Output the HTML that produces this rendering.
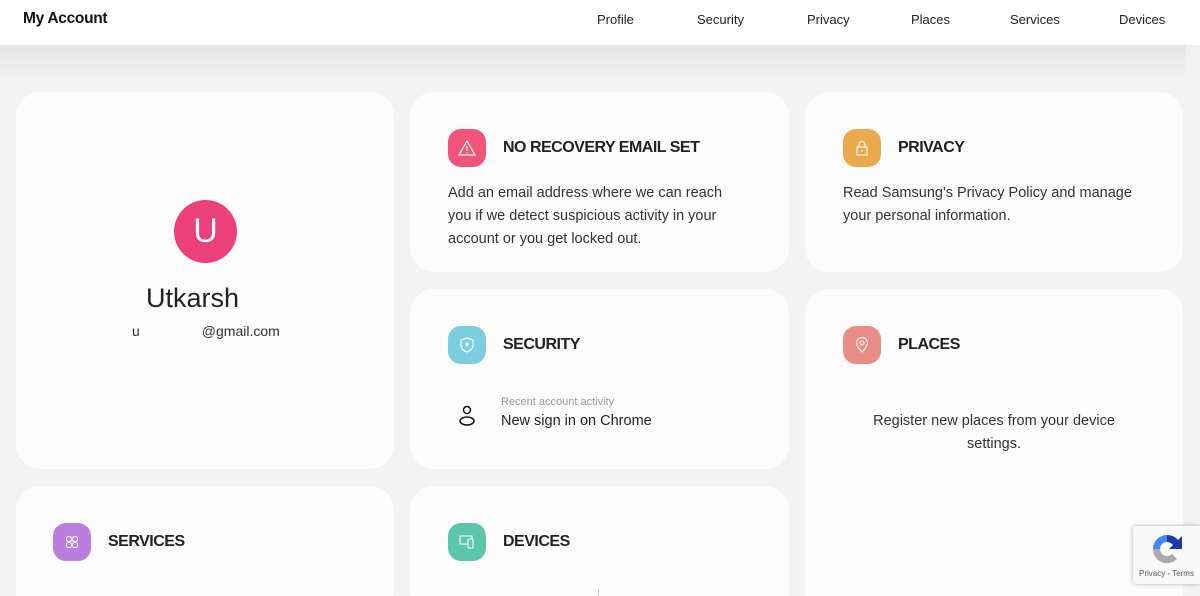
<!DOCTYPE html>
<html><head><meta charset="utf-8"><style>
*{box-sizing:border-box;margin:0;padding:0}
html,body{width:1200px;height:596px;overflow:hidden}
body{background:#f3f3f3;font-family:"Liberation Sans","DejaVu Sans",sans-serif;color:#222;position:relative}
#wrap{position:absolute;left:0;top:0;width:1200px;height:596px;overflow:hidden}
.hdr{position:absolute;left:0;top:0;width:1200px;height:45px;background:#fff;z-index:2}
.logo{position:absolute;left:23px;top:10px;font-size:15.5px;font-weight:bold;color:#111;letter-spacing:-0.3px}
.nav{position:absolute;top:12px;font-size:13px;color:#222}
.grad{position:absolute;left:0;top:45px;width:1200px;height:40px;background:linear-gradient(#e5e5e5,#f3f3f3)}
.sb{position:absolute;left:1186px;top:45px;width:14px;height:551px;background:#f1f1f1}
.card{position:absolute;background:#fcfcfc;border-radius:24px}
.ic{position:absolute;width:38px;height:38px;border-radius:13px;display:flex;align-items:center;justify-content:center}
.t{position:absolute;font-size:16px;font-weight:bold;color:#222;letter-spacing:-0.5px}
.p{position:absolute;font-size:14.5px;line-height:23px;color:#333}
</style></head><body><div id="wrap">
<div class="hdr">
<div class="logo">My Account</div>
<div class="nav" style="left:597px">Profile</div>
<div class="nav" style="left:697px">Security</div>
<div class="nav" style="left:807px">Privacy</div>
<div class="nav" style="left:911px">Places</div>
<div class="nav" style="left:1010px">Services</div>
<div class="nav" style="left:1119px">Devices</div>
</div>
<div class="grad"></div>
<div class="sb"></div>

<div class="card" style="left:16px;top:92px;width:378px;height:377px">
<div style="position:absolute;left:158px;top:108px;width:63px;height:63px;border-radius:50%;background:#ec407a;color:#fff;font-size:34px;text-align:center;line-height:63px">U</div>
<div style="position:absolute;left:130px;top:191px;font-size:27px;color:#222">Utkarsh</div>
<div style="position:absolute;left:116px;top:231px;font-size:14px;color:#333">u<span style="display:inline-block;width:62px"></span>@gmail.com</div>
</div>

<div class="card" style="left:410px;top:92px;width:379px;height:180px">
<div class="ic" style="left:38px;top:37px;background:#f25378"><svg width="20" height="20" viewBox="0 0 20 20" fill="none" stroke="#fff" stroke-width="1.2"><path d="M10 3L18 17H2Z"/><path d="M10 8v5M10 14.5v1"/></svg></div>
<div class="t" style="left:93px;top:47px">NO RECOVERY EMAIL SET</div>
<div class="p" style="left:38px;top:90px">Add an email address where we can reach<br>you if we detect suspicious activity in your<br>account or you get locked out.</div>
</div>

<div class="card" style="left:410px;top:289px;width:379px;height:180px">
<div class="ic" style="left:38px;top:37px;background:#7ccde0"><svg width="18" height="18" viewBox="0 0 18 18" fill="none" stroke="#fff" stroke-width="1.1"><path d="M9 2L15 4V9C15 12.5 12 15 9 16C6 15 3 12.5 3 9V4Z"/><circle cx="9" cy="8" r="1"/><path d="M9 9v2"/></svg></div>
<div class="t" style="left:93px;top:47px">SECURITY</div>
<svg style="position:absolute;left:48px;top:116px" width="18" height="22" viewBox="0 0 18 22" fill="none" stroke="#111" stroke-width="1.5"><circle cx="9" cy="5" r="3.5"/><ellipse cx="9" cy="16" rx="7" ry="4"/></svg>
<div style="position:absolute;left:91px;top:107px;font-size:11px;color:#999">Recent account activity</div>
<div style="position:absolute;left:91px;top:124px;font-size:14.5px;color:#222">New sign in on Chrome</div>
</div>

<div class="card" style="left:410px;top:486px;width:379px;height:130px">
<div class="ic" style="left:38px;top:37px;background:#5bc6ad"><svg width="18" height="18" viewBox="0 0 18 18" fill="none" stroke="#fff" stroke-width="1.1"><path d="M10 11H2V3h12v3"/><rect x="10" y="6" width="5" height="9" rx="1"/></svg></div>
<div class="t" style="left:93px;top:47px">DEVICES</div>
<div style="position:absolute;left:188px;top:103px;width:1px;height:10px;background:#ccc"></div>
</div>

<div class="card" style="left:16px;top:486px;width:378px;height:130px">
<div class="ic" style="left:37px;top:37px;background:#b97ee0"><svg width="18" height="18" viewBox="0 0 18 18" fill="none" stroke="#fff" stroke-width="1.1"><circle cx="6" cy="6" r="2.6"/><circle cx="12" cy="6" r="2.6"/><circle cx="6" cy="12" r="2.6"/><circle cx="12" cy="12" r="2.6"/></svg></div>
<div class="t" style="left:92px;top:47px">SERVICES</div>
</div>

<div class="card" style="left:805px;top:92px;width:378px;height:180px">
<div class="ic" style="left:38px;top:37px;background:#eba94c"><svg width="18" height="18" viewBox="0 0 18 18" fill="none" stroke="#fff" stroke-width="1.1"><rect x="4" y="8" width="10" height="8"/><path d="M6 8V5.5a3 3 0 0 1 6 0V8"/><path d="M9 11v2"/></svg></div>
<div class="t" style="left:93px;top:47px">PRIVACY</div>
<div class="p" style="left:38px;top:90px">Read Samsung's Privacy Policy and manage<br>your personal information.</div>
</div>

<div class="card" style="left:805px;top:289px;width:378px;height:330px">
<div class="ic" style="left:38px;top:37px;background:#e88d86"><svg width="18" height="18" viewBox="0 0 18 18" fill="none" stroke="#fff" stroke-width="1.1"><path d="M9 16C5 12 3.5 9.5 3.5 7a5.5 5.5 0 0 1 11 0c0 2.5-1.5 5-5.5 9Z"/><circle cx="9" cy="7" r="2"/></svg></div>
<div class="t" style="left:93px;top:47px">PLACES</div>
<div class="p" style="left:0;top:121px;width:378px;text-align:center">Register new places from your device<br>settings.</div>
</div>

<div style="position:absolute;left:1133px;top:526px;width:67px;height:58px;background:#f9f9f9;box-shadow:0 0 4px rgba(0,0,0,0.3);border-radius:3px 0 0 3px">
<svg style="position:absolute;left:16px;top:5px" width="36" height="36" viewBox="0 0 36 36"><path d="M18 4a14 14 0 0 1 11 5l4-4v13H20l4-4a8 8 0 0 0-6-3Z" fill="#1c3aa9"/><path d="M4 18A14 14 0 0 1 18 4v7a7 7 0 0 0-7 7Z" fill="#4285f4"/><path d="M4 18h7a7 7 0 0 0 12 5l5 5A14 14 0 0 1 4 18Z" fill="#ababab"/></svg>
<div style="position:absolute;left:6px;top:43px;font-size:8px;color:#555">Privacy - Terms</div>
</div>
</div></body></html>
